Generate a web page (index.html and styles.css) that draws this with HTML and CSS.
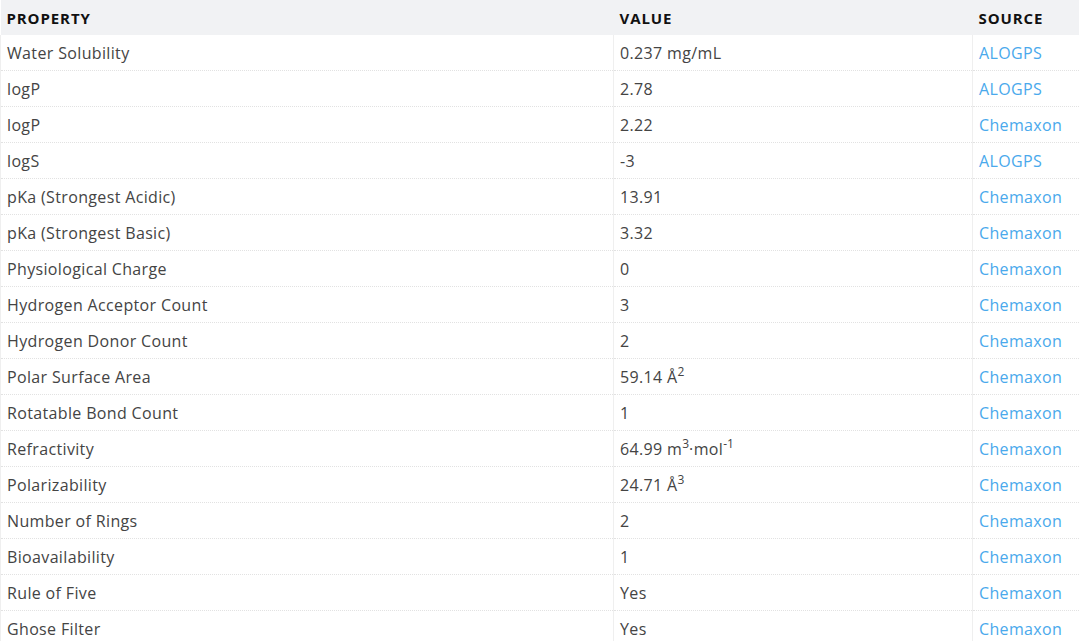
FILE: index.html
```html
<!DOCTYPE html>
<html>
<head>
<meta charset="utf-8">
<link rel="stylesheet" href="styles.css">
</head>
<body>
<table class="props">
  <thead>
    <tr><th class="c-prop">Property</th><th class="c-val">Value</th><th class="c-src">Source</th></tr>
  </thead>
  <tbody>
    <tr><td>Water Solubility</td><td>0.237 mg/mL</td><td><a href="#">ALOGPS</a></td></tr>
    <tr><td>logP</td><td>2.78</td><td><a href="#">ALOGPS</a></td></tr>
    <tr><td>logP</td><td>2.22</td><td><a href="#">Chemaxon</a></td></tr>
    <tr><td>logS</td><td>-3</td><td><a href="#">ALOGPS</a></td></tr>
    <tr><td>pKa (Strongest Acidic)</td><td>13.91</td><td><a href="#">Chemaxon</a></td></tr>
    <tr><td>pKa (Strongest Basic)</td><td>3.32</td><td><a href="#">Chemaxon</a></td></tr>
    <tr><td>Physiological Charge</td><td>0</td><td><a href="#">Chemaxon</a></td></tr>
    <tr><td>Hydrogen Acceptor Count</td><td>3</td><td><a href="#">Chemaxon</a></td></tr>
    <tr><td>Hydrogen Donor Count</td><td>2</td><td><a href="#">Chemaxon</a></td></tr>
    <tr><td>Polar Surface Area</td><td>59.14 Å<sup>2</sup></td><td><a href="#">Chemaxon</a></td></tr>
    <tr><td>Rotatable Bond Count</td><td>1</td><td><a href="#">Chemaxon</a></td></tr>
    <tr><td>Refractivity</td><td>64.99 m<sup>3</sup>·mol<sup>-1</sup></td><td><a href="#">Chemaxon</a></td></tr>
    <tr><td>Polarizability</td><td>24.71 Å<sup>3</sup></td><td><a href="#">Chemaxon</a></td></tr>
    <tr><td>Number of Rings</td><td>2</td><td><a href="#">Chemaxon</a></td></tr>
    <tr><td>Bioavailability</td><td>1</td><td><a href="#">Chemaxon</a></td></tr>
    <tr><td>Rule of Five</td><td>Yes</td><td><a href="#">Chemaxon</a></td></tr>
    <tr><td>Ghose Filter</td><td>Yes</td><td><a href="#">Chemaxon</a></td></tr>
  </tbody>
</table>
</body>
</html>
```

FILE: styles.css
```css
html, body {
  margin: 0;
  padding: 0;
  background: #fff;
}
body {
  font-family: "Open Sans", "Liberation Sans", sans-serif;
  font-size: 16px;
  color: #444;
}
.props {
  width: 1079px;
  border-collapse: collapse;
  table-layout: fixed;
}
.props th {
  background: #f1f2f4;
  height: 35px;
  padding: 0 6px;
  text-align: left;
  font-size: 15px;
  font-weight: 700;
  letter-spacing: 0.9px;
  text-transform: uppercase;
  color: #111;
  vertical-align: middle;
}
.c-prop { width: 601px; }
.c-val { width: 347px; }
.props td {
  height: 35px;
  padding: 0 6px;
  border-bottom: 1px dotted #e2e2e2;
  border-left: 1px solid #efefef;
  vertical-align: middle;
  white-space: nowrap;
  letter-spacing: 0.35px;
}
.props sup {
  font-size: 12px;
  line-height: 0;
  vertical-align: 7px;
  letter-spacing: 0;
}
.props a {
  color: #4aa9ec;
  text-decoration: none;
}
```
